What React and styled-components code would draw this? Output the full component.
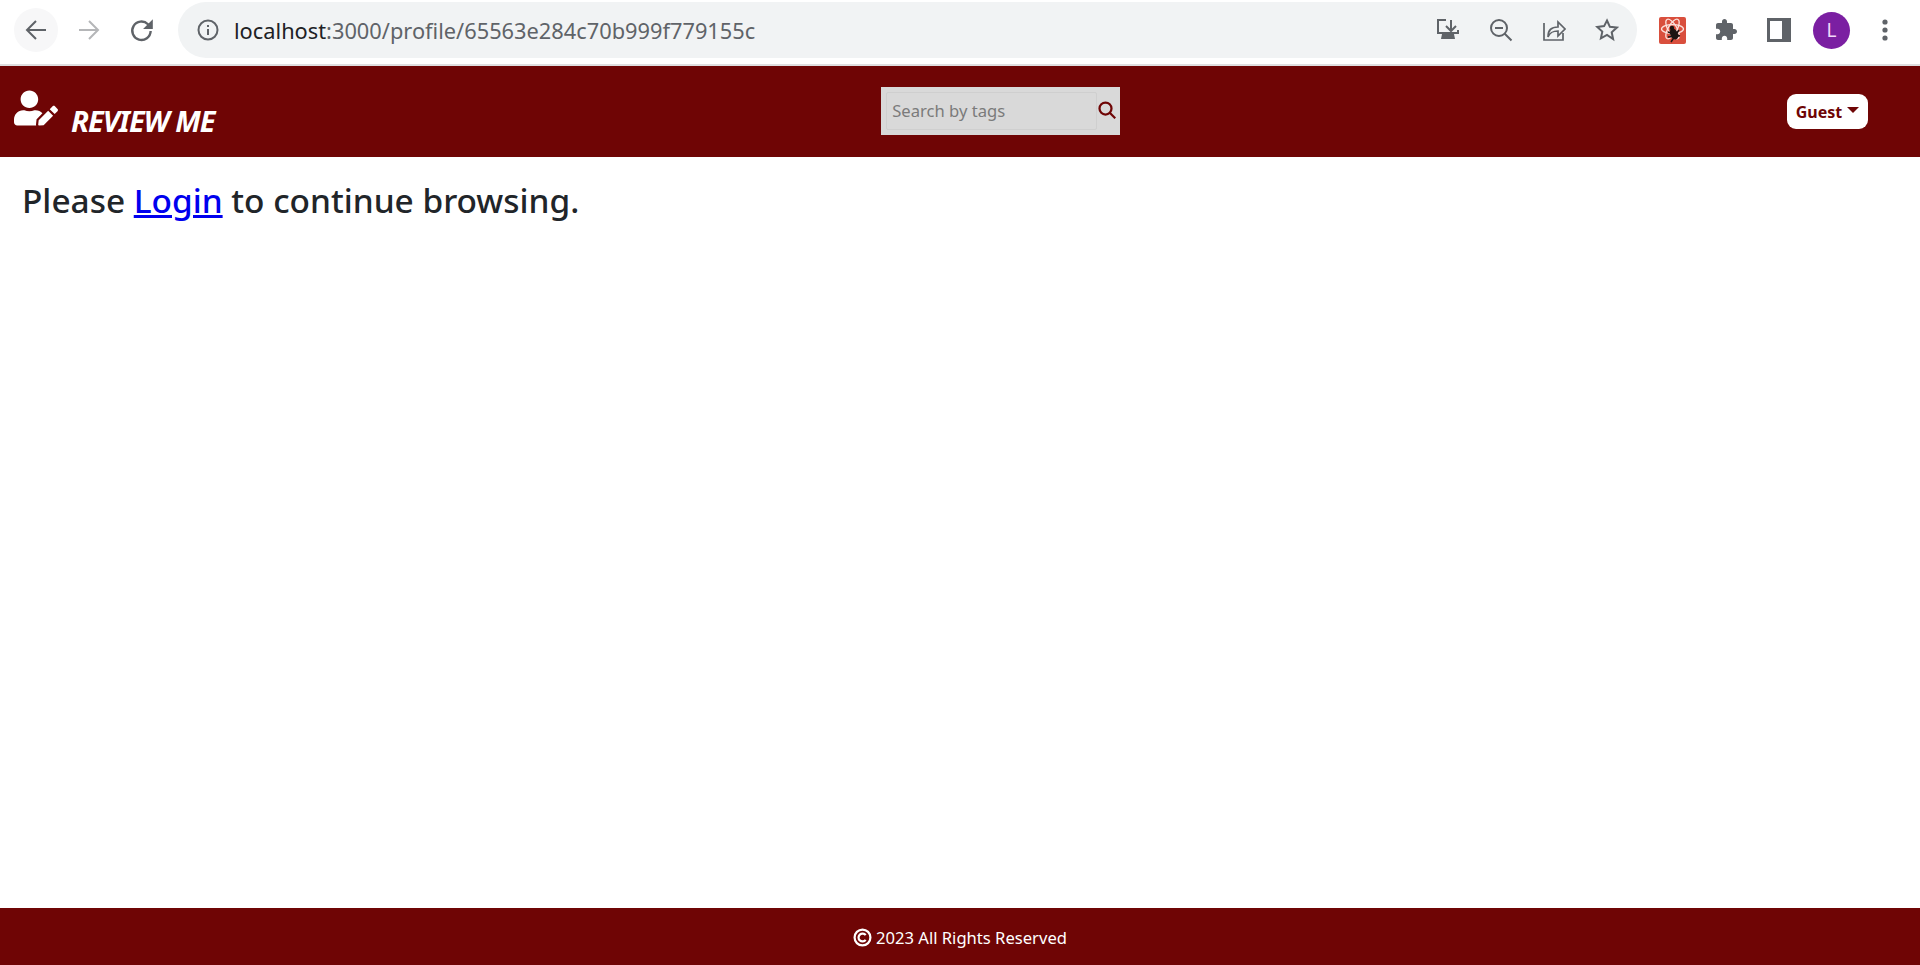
import React from 'react';
import styled, { createGlobalStyle } from 'styled-components';
import { FaUserEdit } from 'react-icons/fa';

const GlobalStyle = createGlobalStyle`
  html, body {
    margin: 0;
    height: 100%;
  }
  body {
    background: #fff;
    font-family: "Noto Sans", "Open Sans", sans-serif;
  }
  #root {
    height: 100%;
  }
`;

const Page = styled.div`
  display: flex;
  flex-direction: column;
  height: 965px;
  overflow: hidden;
`;

const BrowserBar = styled.div`
  box-sizing: border-box;
  height: 66px;
  flex: none;
  display: flex;
  align-items: flex-start;
  padding: 2px 0 0 14px;
  background: #fff;
  border-bottom: 2px solid #dedfe0;
`;

const NavButtons = styled.div`
  display: flex;
  align-items: center;
  height: 56px;
  gap: 9px;
`;

const RoundButton = styled.div`
  width: 44px;
  height: 44px;
  border-radius: 50%;
  display: flex;
  align-items: center;
  justify-content: center;
  background: ${(p) => (p.$hover ? '#f7f7f8' : 'transparent')};
`;

const UrlPill = styled.div`
  box-sizing: border-box;
  width: 1459px;
  height: 56px;
  margin-left: 14px;
  padding: 0 18px 0 18px;
  display: flex;
  align-items: center;
  border-radius: 28px;
  background: #f1f3f4;
`;

const Url = styled.span`
  margin-left: 14px;
  flex: 1;
  font-size: 21.8px;
  color: #5f6368;
  white-space: nowrap;
  b {
    font-weight: 400;
    color: #202124;
  }
`;

const PillIcons = styled.div`
  display: flex;
  align-items: center;
  gap: 29px;
`;

const ToolIcons = styled.div`
  display: flex;
  align-items: center;
  height: 56px;
  margin-left: 9px;
`;

const ToolSlot = styled.div`
  width: 53px;
  display: flex;
  align-items: center;
  justify-content: center;
`;

const Avatar = styled.div`
  width: 37px;
  height: 37px;
  border-radius: 50%;
  background: #7b1fa2;
  color: #f3d9fb;
  display: flex;
  align-items: center;
  justify-content: center;
  font-size: 19px;
`;

const Nav = styled.nav`
  box-sizing: border-box;
  height: 91px;
  flex: none;
  display: flex;
  justify-content: space-between;
  align-items: center;
  padding: 0 52px 0 14px;
  background: #6f0505;
`;

const Brand = styled.a`
  display: flex;
  align-items: flex-end;
  gap: 13px;
  color: #fff;
  height: 48px;
  margin-bottom: 3px;
  svg {
    align-self: flex-start;
  }
`;

const BrandName = styled.span`
  font-size: 29px;
  line-height: 26px;
  font-weight: 700;
  font-style: italic;
  letter-spacing: -1px;
  white-space: nowrap;
`;

const SearchBox = styled.form`
  box-sizing: border-box;
  width: 239px;
  height: 48px;
  padding: 5px 3px 5px 5px;
  margin: 0 0 2px;
  display: flex;
  align-items: center;
  background: #d9d9d9;
`;

const SearchInput = styled.input`
  box-sizing: border-box;
  width: 211px;
  height: 38px;
  padding: 0 5px;
  border: 1px solid #cfcfcf;
  border-radius: 2px;
  background: #d9d9d9;
  font: 400 16.6px "Noto Sans", sans-serif;
  outline: none;
  &::placeholder {
    color: #7b7b7b;
    opacity: 1;
  }
`;

const SearchButton = styled.button`
  flex: 1;
  padding: 0 0 2px;
  border: 0;
  background: none;
  display: flex;
  justify-content: center;
`;

const GuestButton = styled.button`
  box-sizing: border-box;
  width: 81px;
  height: 35px;
  padding: 0;
  border: 0;
  border-radius: 9px;
  background: #fff;
  color: #6f0505;
  font: 700 16px "Noto Sans", sans-serif;
  display: flex;
  align-items: center;
  justify-content: center;
  gap: 5px;
`;

const Caret = styled.span`
  width: 0;
  height: 0;
  margin-bottom: 3px;
  border-top: 6px solid #6f0505;
  border-left: 6px solid transparent;
  border-right: 6px solid transparent;
`;

const Main = styled.main`
  flex: 1;
  padding: 24px 22px 0;
`;

const Message = styled.h2`
  margin: 0;
  font-size: 33.4px;
  line-height: 38px;
  font-weight: 500;
  color: #212529;
  a {
    color: #0000ee;
  }
`;

const Footer = styled.footer`
  box-sizing: border-box;
  height: 57px;
  padding-top: 2px;
  flex: none;
  display: flex;
  align-items: center;
  justify-content: center;
  gap: 4px;
  background: #6f0505;
  color: #fff;
  font-size: 16.6px;
`;

function Glyph({ size = 24, children, ...rest }) {
  return (
    <svg width={size} height={size} viewBox="0 0 24 24" fill="none" stroke="#5f6368" strokeWidth="2" {...rest}>
      {children}
    </svg>
  );
}

function ExtensionIcon() {
  return (
    <svg width="27" height="27" viewBox="0 0 27 27">
      <rect width="27" height="27" rx="2" fill="#d94f3d" />
      <g fill="none" stroke="#fbe3de" strokeWidth="1.3">
        <ellipse cx="13.5" cy="12" rx="11" ry="4.4" />
        <ellipse cx="13.5" cy="12" rx="11" ry="4.4" transform="rotate(60 13.5 12)" />
        <ellipse cx="13.5" cy="12" rx="11" ry="4.4" transform="rotate(120 13.5 12)" />
      </g>
      <g stroke="#1c1512" strokeWidth="1.5">
        <ellipse cx="15" cy="17" rx="3" ry="5" fill="#1c1512" transform="rotate(-25 15 17)" />
        <path d="M9 15l12 4M9 20l11-1M12 25l8-12" />
      </g>
      <circle cx="13" cy="11" r="2.2" fill="#1c1512" />
    </svg>
  );
}

export default function App() {
  return (
    <Page>
      <GlobalStyle />
      <BrowserBar>
        <NavButtons>
          <RoundButton $hover>
            <Glyph>
              <path d="M22 12H3M12 3l-9 9 9 9" />
            </Glyph>
          </RoundButton>
          <RoundButton>
            <Glyph stroke="#b5b6b8">
              <path d="M2 12h19M12 3l9 9-9 9" />
            </Glyph>
          </RoundButton>
          <RoundButton>
            <Glyph size={26} strokeWidth="2.2">
              <path d="M20 13a8.500 8.500 0 1 1-2.500-6.300L20 9.500" />
              <path d="M22 2v9h-9z" fill="#5f6368" stroke="none" />
            </Glyph>
          </RoundButton>
        </NavButtons>
        <UrlPill>
          <Glyph>
            <circle cx="12" cy="12" r="9.5" />
            <path d="M12 11v6M12 7v2" />
          </Glyph>
          <Url>
            <b>localhost</b>:3000/profile/65563e284c70b999f779155c
          </Url>
          <PillIcons>
            <Glyph>
              <path d="M10 2H2v13h20v-3" />
              <path d="M15 2v10M10 8l5 5 5-5" />
              <path d="M6 16h12l1 5H5z" fill="#5f6368" stroke="none" />
            </Glyph>
            <Glyph>
              <circle cx="10" cy="10" r="8" />
              <path d="M6 10h8M15.5 15.5l7 7" />
            </Glyph>
            <Glyph strokeWidth="1.7">
              <path d="M2 5v17h19v-7" />
              <path d="M6 19c0-7 3-10 10-10V4l7 7-7 7v-5c-5 0-8 1-10 6z" />
            </Glyph>
            <Glyph>
              <path d="M12 2.5l2.9 6.3 6.9.8-5.1 4.7 1.4 6.8L12 17l-6.100 3.400 1.400-6.800-5.100-4.700 6.900-.8z" />
            </Glyph>
          </PillIcons>
        </UrlPill>
        <ToolIcons>
          <ToolSlot>
            <ExtensionIcon />
          </ToolSlot>
          <ToolSlot>
            <Glyph stroke="none" fill="#5f6368">
              <path d="M20.500 11H19V7c0-1.100-.9-2-2-2h-4V3.500C13 2.120 11.880 1 10.500 1S8 2.120 8 3.500V5H4c-1.100 0-1.990.9-1.990 2v3.800H3.500c1.490 0 2.700 1.210 2.700 2.700s-1.210 2.700-2.700 2.700H2V20c0 1.100.9 2 2 2h3.800v-1.500c0-1.490 1.210-2.700 2.700-2.700 1.490 0 2.700 1.210 2.700 2.700V22H17c1.100 0 2-.9 2-2v-4h1.500c1.380 0 2.500-1.120 2.500-2.500S21.880 11 20.500 11z" />
            </Glyph>
          </ToolSlot>
          <ToolSlot>
            <Glyph>
              <rect x="1.500" y="1.500" width="21" height="21" strokeWidth="3" />
              <rect x="15" y="2" width="8" height="20" fill="#5f6368" stroke="none" />
            </Glyph>
          </ToolSlot>
          <ToolSlot>
            <Avatar>L</Avatar>
          </ToolSlot>
          <ToolSlot>
            <Glyph stroke="none" fill="#5f6368">
              <circle cx="12" cy="4" r="2.600" />
              <circle cx="12" cy="12" r="2.600" />
              <circle cx="12" cy="20" r="2.600" />
            </Glyph>
          </ToolSlot>
        </ToolIcons>
      </BrowserBar>

      <Nav>
        <Brand>
          <FaUserEdit size={44} />
          <BrandName>REVIEW ME</BrandName>
        </Brand>
        <SearchBox>
          <SearchInput placeholder="Search by tags" />
          <SearchButton type="button">
            <Glyph size={18} stroke="#6f0505" strokeWidth="3">
              <circle cx="10" cy="10" r="8" />
              <path d="M16 16l7 7" />
            </Glyph>
          </SearchButton>
        </SearchBox>
        <GuestButton type="button">
          Guest <Caret />
        </GuestButton>
      </Nav>

      <Main>
        <Message>
          Please <a href="#login">Login</a> to continue browsing.
        </Message>
      </Main>

      <Footer>
        <Glyph size={19} stroke="#fff" strokeWidth="2.800">
          <circle cx="12" cy="12" r="10" />
          <path d="M16 9a5 5 0 1 0 0 6" />
        </Glyph>
        <span>2023 All Rights Reserved</span>
      </Footer>
    </Page>
  );
}
